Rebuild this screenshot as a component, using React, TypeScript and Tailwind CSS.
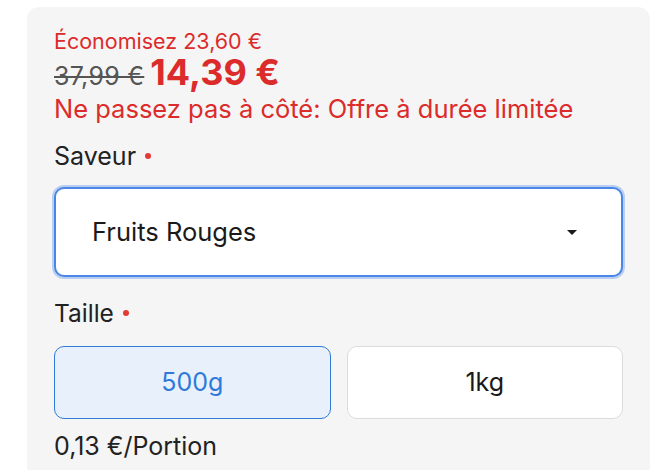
const App = () => {
  return (
    <div className="min-h-[470px] bg-white pt-[7px] pl-[27px] pr-[11px] font-['Inter','Liberation_Sans',sans-serif]">
      <div className="rounded-t-[12px] bg-[#f5f5f5] px-[27px] pt-[22px] pb-8">
        {/* Price block */}
        <p className="text-[21.5px] leading-[24px] text-[#dc2b2b]">Économisez 23,60 €</p>
        <div className="flex items-baseline gap-[6px] leading-[38px]">
          <span className="text-[25px] tracking-[0.3px] text-[#555] line-through decoration-[1.5px]">37,99 €</span>
          <span className="text-[36px] font-bold text-[#dc2b2b]">14,39 €</span>
        </div>
        <p className="text-[25.5px] leading-[28px] text-[#dc2b2b]">Ne passez pas à côté: Offre à durée limitée</p>

        {/* Saveur */}
        <div className="mt-[19px] flex items-center gap-[9px] text-[25px] leading-[28px] text-[#222]">
          Saveur
          <span className="size-[6px] rounded-full bg-[#e53935]" />
        </div>
        <div className="mt-[17px] flex h-[90px] items-center justify-between rounded-[10px] border-2 border-[#4a86e8] bg-white pl-[36px] pr-[44px] shadow-[0_0_0_2px_rgba(74,134,232,0.35)]">
          <span className="text-[25.5px] text-[#1a1a1a]">Fruits Rouges</span>
          <svg width="10" height="5" viewBox="0 0 10 5">
            <path d="M0 0h10L5 5z" fill="#1a1a1a" />
          </svg>
        </div>

        {/* Taille */}
        <div className="mt-[22px] flex items-center gap-[9px] text-[24.5px] leading-[28px] text-[#222]">
          Taille
          <span className="size-[6px] rounded-full bg-[#e53935]" />
        </div>
        <div className="mt-[19px] grid grid-cols-2 gap-[16px]">
          <button className="h-[73px] rounded-[10px] border border-[#2f7ad9] bg-[#e8f0fc] text-[25px] text-[#2f7ad9]">
            500g
          </button>
          <button className="h-[73px] rounded-[10px] border border-[#dcdcdc] bg-white text-[25px] text-[#1a1a1a]">
            1kg
          </button>
        </div>
        <p className="mt-[13px] text-[25px] leading-[28px] text-[#222]">0,13 €/Portion</p>
      </div>
    </div>
  );
};

export default App;
